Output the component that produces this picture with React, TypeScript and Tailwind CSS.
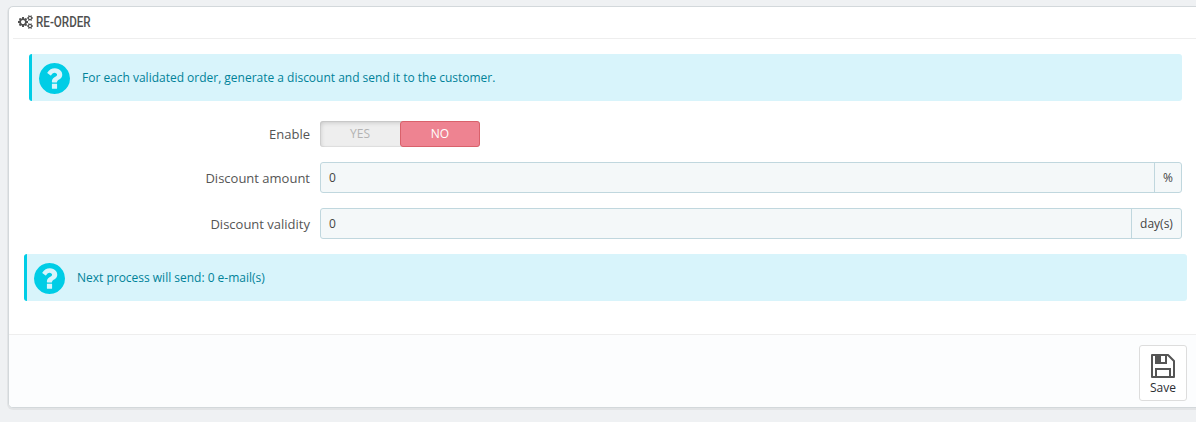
const GEAR_SMALL =
  'q0 16-149 31-12 27-30 52 51 113 51 138 0 4-4 7-122 71-124 71-8 0-46-47t-52-68q-20 2-30 2t-30-2q-14 21-52 68t-46 47q-2 0-124-71-4-3-4-7 0-25 51-138-18-25-30-52-149-15-149-31v-140q0-16 149-31 13-29 30-52-51-113-51-138 0-4 4-7 4-2 35-20t59-34 30-16q8 0 46 46.5t52 67.5q20-2 30-2t30 2q51-71 92-112l6-2q4 0 124 70 4 3 4 7 0 25-51 138 17 23 30 52 149 15 149 31z';

const COGS =
  'M896 896q0-106-75-181t-181-75-181 75-75 181 75 181 181 75 181-75 75-181zm768 512q0-52-38-90t-90-38-90 38-38 90q0 53 37.5 90.5t90.5 37.5 90.5-37.5 37.5-90.5zm0-1024q0-52-38-90t-90-38-90 38-38 90q0 53 37.5 90.5t90.5 37.5 90.5-37.5 37.5-90.5zm-384 421v185q0 10-7 19.5t-16 10.5l-155 24q-11 35-32 76 34 48 90 115 7 10 7 20 0 12-7 19-23 30-82.5 89.5t-78.5 59.5q-11 0-21-7l-115-90q-37 19-77 31-11 108-23 155-7 24-30 24h-186q-11 0-20-7.5t-10-17.5l-23-153q-34-10-75-31l-118 89q-7 7-20 7-11 0-21-8-144-133-144-160 0-9 7-19 10-14 41-53t47-61q-23-44-35-82l-152-24q-10-1-17-9.5t-7-19.5v-185q0-10 7-19.5t16-10.5l155-24q11-35 32-76-34-48-90-115-7-11-7-20 0-12 7-20 22-30 82-89t79-59q11 0 21 7l115 90q34-18 77-32 11-108 23-154 7-24 30-24h186q11 0 20 7.5t10 17.5l23 153q34 10 75 31l118-89q8-7 20-7 11 0 21 8 144 133 144 160 0 9-7 19-12 16-42 54t-45 60q23 48 34 82l152 23q10 2 17 10.5t7 19.5z' +
  'M1920 1338v140' + GEAR_SMALL + 'M1920 314v140' + GEAR_SMALL;

const QUESTION =
  'M1024 1376v-192q0-14-9-23t-23-9h-192q-14 0-23 9t-9 23v192q0 14 9 23t23 9h192q14 0 23-9t9-23zm256-672q0-88-55.5-163t-138.5-116-170-41q-243 0-371 213-15 24 8 42l132 100q7 6 19 6 16 0 25-12 53-68 86-92 34-24 86-24 48 0 85.5 26t37.5 59q0 38-20 61t-68 45q-63 28-115.5 86.5t-52.5 125.5v36q0 14 9 23t23 9h192q14 0 23-9t9-23q0-19 21.5-49.5t54.5-49.5q32-18 49-28.5t46-35 44.5-48 28-60.5 12.5-81zm384 192q0 209-103 385.5t-279.5 279.5-385.5 103-385.5-103-279.5-279.5-103-385.5 103-385.5 279.5-279.5 385.5-103 385.5 103 279.5 279.5 103 385.5z';

function Alert({ text }: { text: string }) {
  return (
    <div className="flex h-[47px] items-center rounded-[3px] border-l-3 border-[#00cde6] bg-[#d8f4fb] pl-[7px] text-[12px] text-[#008299]">
      <svg className="mt-px size-[31px] shrink-0" viewBox="128 128 1536 1536" fill="#00cde6">
        <path d={QUESTION} />
      </svg>
      <span className="ml-3 tracking-[-0.01px] whitespace-nowrap">{text}</span>
    </div>
  );
}

function Field({ label, unit, unitClass }: { label: string; unit: string; unitClass: string }) {
  return (
    <div className="flex h-[31px] items-stretch">
      <label className="w-[281px] pt-[6px] text-right text-[13px] leading-5 text-[#555]">{label}</label>
      <div className="ml-[10px] flex flex-1 items-stretch rounded-[3px] border border-[#c0d7de] bg-[#f4f8f9] text-[12px] text-[#444]">
        <span className="flex-1 pl-2 leading-[29px]">0</span>
        <span className={`border-l border-[#c0d7de] text-center leading-[29px] ${unitClass}`}>{unit}</span>
      </div>
    </div>
  );
}

export default function App() {
  return (
    <div className="h-[422px] w-full overflow-hidden bg-[#eff1f3] pt-[6px] pl-2 font-['Open_Sans',sans-serif]">
      <div className="flex h-[402px] w-[1198px] flex-col overflow-hidden rounded-[5px] border border-[#d3d8db] bg-white shadow-[0_1px_0_1px_rgba(0,0,0,0.05)]">
        <div className="ml-1 flex h-8 shrink-0 items-center border-b border-[#eee] pb-px pl-[5px] text-[#505050]">
          <svg className="h-[14px] w-[15px]" viewBox="0 0 1920 1792" fill="currentColor">
            <path d={COGS} />
          </svg>
          <h3 className="ml-[3px] origin-left scale-x-[0.83] font-[Roboto,sans-serif] text-[14px] leading-5 font-medium whitespace-nowrap">RE-ORDER</h3>
        </div>
        <div className="mt-[15px] mr-[23px] ml-5">
          <Alert text="For each validated order, generate a discount and send it to the customer." />
          <div className="mt-5 flex h-[26px]">
            <span className="w-[281px] pt-[3px] text-right text-[13px] leading-5 text-[#555]">Enable</span>
            <div className="ml-[10px] flex w-[160px] rounded-[3px] bg-[#eee] text-center text-[12px] leading-[24px] shadow-[inset_0_0_0_1px_rgba(0,0,0,0.05),inset_1px_2px_4px_rgba(0,0,0,0.15)]">
              <span className="w-20 pt-px text-[#b3b3b3]">YES</span>
              <span className="w-20 rounded-[3px] border border-[#d9616b] bg-[#ee8391] text-white">NO</span>
            </div>
          </div>
          <div className="mt-[15px] flex flex-col gap-[15px]">
            <Field label="Discount amount" unit="%" unitClass="w-[27px]" />
            <Field label="Discount validity" unit="day(s)" unitClass="w-[50px]" />
          </div>
        </div>
        <div className="mt-[15px] mr-[18px] ml-[15px]">
          <Alert text="Next process will send: 0 e-mail(s)" />
        </div>
        <div className="mt-auto flex h-[73px] shrink-0 justify-end border-t border-[#eee] bg-[#fcfdfe] pt-[10px] pr-[18px]">
          <button className="flex h-14 w-12 flex-col items-center rounded-[3px] border border-[#ddd] bg-white pt-2 text-[12px] text-[#2b2e34]">
            <svg className="size-6" viewBox="0 0 24 24" fill="none" stroke="#555" strokeWidth="2">
              <path d="M1 1h16l6 6v16H1z" strokeLinejoin="round" />
              <path d="M5 23v-8h14v8M5 1v8h10V1" />
              <path d="M5 1h5v8H5z" fill="#555" stroke="none" />
            </svg>
            <span className="mt-px leading-[18px]">Save</span>
          </button>
        </div>
      </div>
    </div>
  );
}
